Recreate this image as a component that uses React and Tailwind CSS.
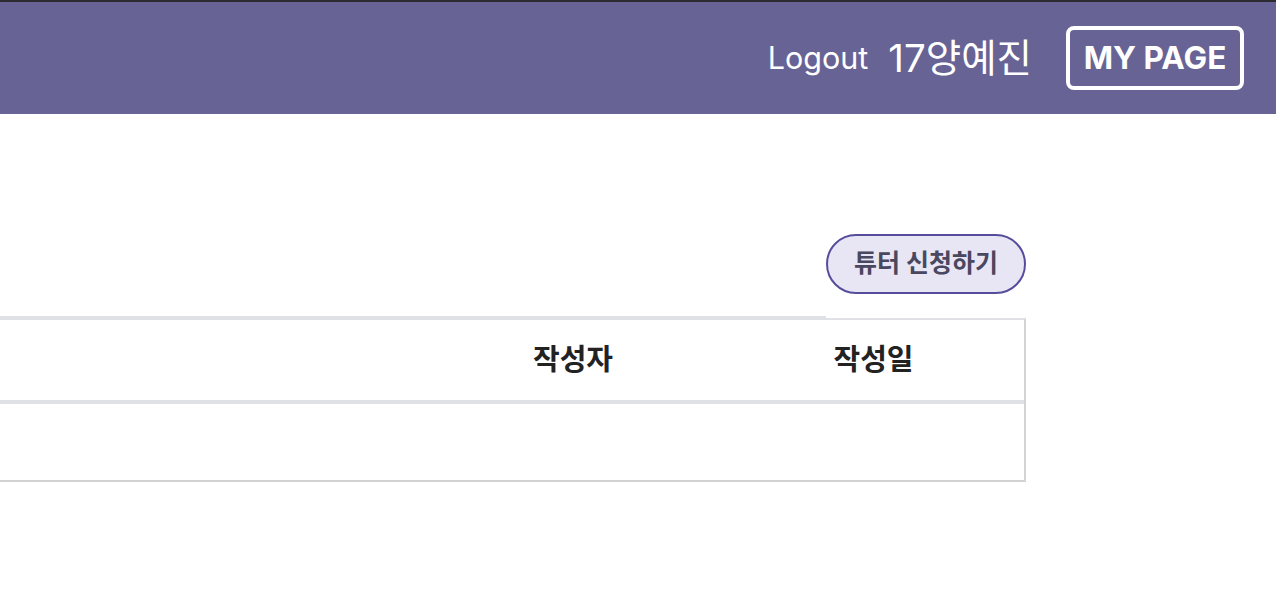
import React from 'react';

const font = { fontFamily: 'Inter, "Noto Sans CJK KR", sans-serif' };

function Header() {
  return (
    <div className="border-t-2 border-[#2b2a30] bg-[#686395]">
      <div className="flex h-[112px] items-center justify-end pr-[32px]">
        <button className="text-[30.5px] leading-none text-white">Logout</button>
        <span className="ml-[20px] text-[38.5px] leading-none text-white">17양예진</span>
        <button className="ml-[34px] flex h-[64px] w-[178px] items-center justify-center rounded-[8px] border-4 border-white text-[31.5px] font-bold leading-none text-white">
          MY PAGE
        </button>
      </div>
    </div>
  );
}

function Board() {
  return (
    <div className="w-[1026px] pt-[120px]">
      <div className="flex justify-end">
        <button className="h-[60px] w-[200px] rounded-full border-2 border-[#554d9c] bg-[#e8e6f4] text-[25px] font-bold text-[#4a4760]">
          튜터 신청하기
        </button>
      </div>
      <div className="mt-[22px] w-[826px] border-b-2 border-[#dfe1e6]" />
      <div className="border-t-2 border-r-2 border-t-[#dfe1e6] border-r-[#d4d4d6]">
        <div className="grid h-[84px] grid-cols-[423px_300px_1fr] items-center border-b-4 border-[#dfe1e6] text-[29px] font-bold text-[#222]">
          <div />
          <div className="text-center">작성자</div>
          <div className="text-center">작성일</div>
        </div>
        <div className="h-[78px] border-b-2 border-[#d2d2d4]" />
      </div>
    </div>
  );
}

export default function App() {
  return (
    <div className="min-h-screen bg-white" style={font}>
      <Header />
      <Board />
    </div>
  );
}
